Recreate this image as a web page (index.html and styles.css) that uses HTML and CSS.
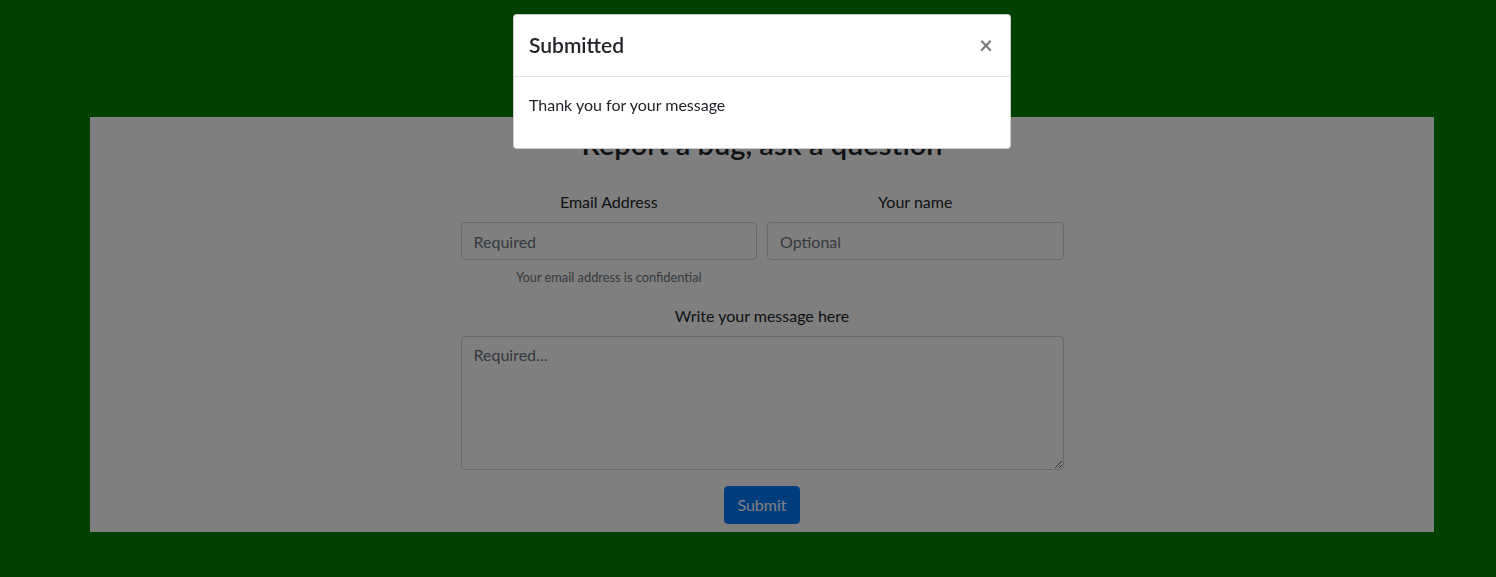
FILE: index.html
```html
<!DOCTYPE html>
<html lang="en">
<head>
<meta charset="utf-8">
<title>Report a bug</title>
<link rel="stylesheet" href="styles.css">
</head>
<body>
<main class="page">
  <section class="panel">
    <h3 class="panel-title">Report a bug, ask a question</h3>
    <form class="form">
      <div class="row">
        <div class="field">
          <label class="label" for="email">Email Address</label>
          <input class="input" id="email" type="email" placeholder="Required">
          <small class="help">Your email address is confidential</small>
        </div>
        <div class="field">
          <label class="label" for="name">Your name</label>
          <input class="input" id="name" type="text" placeholder="Optional">
        </div>
      </div>
      <div class="field msg-field">
        <label class="label" for="msg">Write your message here</label>
        <textarea class="input textarea" id="msg" placeholder="Required..."></textarea>
      </div>
      <div class="actions">
        <button class="btn" type="button">Submit</button>
      </div>
    </form>
  </section>
</main>
<div class="backdrop"></div>
<div class="modal">
  <div class="modal-header">
    <h5 class="modal-title">Submitted</h5>
    <button class="close" type="button" aria-label="Close">&times;</button>
  </div>
  <div class="modal-body">Thank you for your message</div>
</div>
</body>
</html>
```
FILE: styles.css
```css
* { box-sizing: border-box; }
html, body { margin: 0; height: 100%; }
body {
  background: #008000;
  font-family: "Lato", "Open Sans", sans-serif;
  font-size: 16px;
  line-height: 1.5;
  color: #212529;
  overflow: hidden;
}
.page { padding-top: 117px; }
.panel {
  margin: 0 62px 0 90px;
  height: 415px;
  background: #fff;
  padding-top: 9px;
}
.panel-title {
  margin: 0;
  text-align: center;
  font-size: 29px;
  font-weight: 600;
  line-height: 35px;
}
.form {
  width: 603px;
  margin: 29px auto 0;
}
.row { display: flex; gap: 10px; }
.field { flex: 1; display: flex; flex-direction: column; align-items: stretch; }
.label { text-align: center; margin-bottom: 8px; }
.input {
  height: 38px;
  border: 1px solid #ced4da;
  border-radius: 4px;
  padding: 6px 12px;
  font: inherit;
  color: #495057;
  background: #fff;
}
.input::placeholder { color: #6c757d; }
.help {
  text-align: center;
  font-size: 12.8px;
  color: #6c757d;
  margin-top: 8px;
  line-height: 19px;
}
.msg-field { margin-top: 17px; }
.textarea { height: 134px; resize: vertical; }
.actions { display: flex; justify-content: center; margin-top: 16px; }
.btn {
  font: inherit;
  color: #fff;
  background: #007bff;
  border: 1px solid #007bff;
  border-radius: 4px;
  height: 38px;
  padding: 0 12px;
  width: 76px;
}
.backdrop {
  position: fixed;
  inset: 0;
  background: rgba(0, 0, 0, 0.5);
}
.modal {
  position: fixed;
  left: 513px;
  top: 14px;
  width: 498px;
  height: 135px;
  background: #fff;
  border: 1px solid rgba(0, 0, 0, 0.2);
  border-radius: 4px;
}
.modal-header {
  display: flex;
  align-items: center;
  justify-content: space-between;
  padding: 15px 16px 16px 15px;
  border-bottom: 1px solid #dee2e6;
}
.modal-title {
  margin: 0;
  font-size: 21px;
  font-weight: 600;
  line-height: 30px;
}
.close {
  background: none;
  border: 0;
  padding: 0;
  margin-right: 1px;
  font: inherit;
  font-size: 24px;
  font-weight: 700;
  line-height: 1;
  color: #000;
  opacity: 0.5;
}
.modal-body { padding: 16px 16px 16px 15px; }
```
